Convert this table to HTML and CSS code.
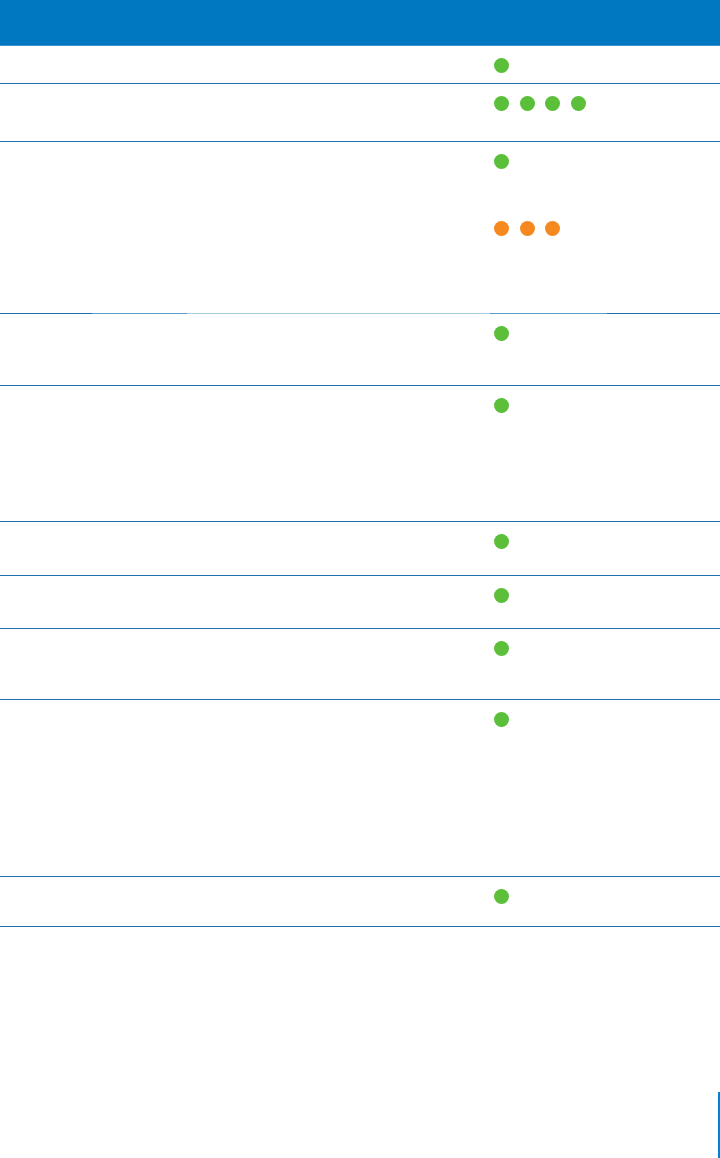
FILE: index.html
```html
<!DOCTYPE html>
<html lang="en">
<head>
  <meta charset="UTF-8" />
  <meta name="viewport" content="width=device-width,initial-scale=1.0" />
  <title>Feature table</title>
  <link rel="stylesheet" href="styles.css">
</head>
<body>
<div class="page">
  <div class="table-head"></div>

  <div class="table">
    <div class="row h37"><div class="label"></div><div class="marks"><span class="dot"></span></div></div>
    <div class="row h57"><div class="label"></div><div class="marks"><span class="dot"></span><span class="dot"></span><span class="dot"></span><span class="dot"></span></div></div>
    <div class="row h171 fade-line">
      <div class="label"></div>
      <div class="marks stack">
        <div class="dots"><span class="dot"></span></div>
        <div class="dots"><span class="dot orange"></span><span class="dot orange"></span><span class="dot orange"></span></div>
      </div>
    </div>
    <div class="row h71"><div class="label"></div><div class="marks"><span class="dot"></span></div></div>
    <div class="row h135"><div class="label"></div><div class="marks"><span class="dot"></span></div></div>
    <div class="row h53"><div class="label"></div><div class="marks"><span class="dot"></span></div></div>
    <div class="row h52"><div class="label"></div><div class="marks"><span class="dot"></span></div></div>
    <div class="row h70"><div class="label"></div><div class="marks"><span class="dot"></span></div></div>
    <div class="row h176"><div class="label"></div><div class="marks"><span class="dot"></span></div></div>
    <div class="row h49"><div class="label"></div><div class="marks"><span class="dot"></span></div></div>
  </div>

  <div class="footer"><span class="tab"></span></div>
</div>
</body>
</html>
```

FILE: styles.css
```css
:root { --head:#0078c1; --rule:#1b70b0; --green:#5bbf3a; --orange:#f5881e; }
*{box-sizing:border-box;margin:0;padding:0}
html,body{height:100%}
body{background:#fff;font-family:"Liberation Sans",Arial,sans-serif}

.page{min-height:100vh;display:flex;flex-direction:column}

.table-head{height:46px;background:var(--head);border-bottom:1px solid #3b94cf}

.row{display:grid;grid-template-columns:494px 1fr;border-bottom:1px solid var(--rule);box-sizing:content-box}
.row.h37{height:37px}.row.h57{height:57px}.row.h171{height:171px}.row.h71{height:71px}
.row.h135{height:135px}.row.h53{height:53px}.row.h52{height:52px}.row.h70{height:70px}
.row.h176{height:176px}.row.h49{height:49px}

/* the rule under this row fades out in the middle */
.row.fade-line{border-bottom:0;padding-bottom:1px;
  background:linear-gradient(90deg,var(--rule) 0 92px,#5c9bc9 92px 187px,#a9cde0 187px 490px,#5c9bc9 490px 607px,var(--rule) 607px) bottom/100% 1px no-repeat}

.marks{display:flex;gap:10.5px;padding-top:11.5px;align-items:flex-start}
.marks.stack{flex-direction:column;gap:52px}
.dots{display:flex;gap:10.5px}

.dot{width:15px;height:15px;border-radius:50%;background:var(--green);display:block}
.dot.orange{background:var(--orange)}

.footer{margin-top:auto;display:flex;justify-content:flex-end}
.tab{width:2px;height:66px;background:#0081d1}
```
